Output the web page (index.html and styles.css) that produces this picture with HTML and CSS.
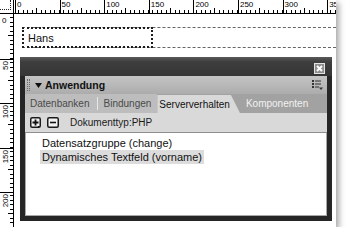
FILE: index.html
```html
<!DOCTYPE html>
<html>
<head>
    <title>Anwendung</title>
    <meta name="viewport" content="width=device-width, initial-scale=1.0">
    <link rel="stylesheet" href="styles.css">
</head>
<body>
    <div class="shot">
        <div class="top">
            <div class="corner"><div class="origin"></div></div>
            <div class="hruler">
                <span class="seg">0</span>
                <span class="seg">50</span>
                <span class="seg">100</span>
                <span class="seg">150</span>
                <span class="seg">200</span>
                <span class="seg">250</span>
                <span class="seg">300</span>
                <span class="seg">35</span>
            </div>
        </div>
        <div class="main">
            <div class="vruler">
                <span class="vseg first">0</span>
                <span class="vseg"><span class="vlabel">50</span></span>
                <span class="vseg"><span class="vlabel">100</span></span>
                <span class="vseg"><span class="vlabel">150</span></span>
                <span class="vseg"><span class="vlabel">200</span></span>
            </div>
            <div class="canvas">
                <div class="tablerow">
                    <div class="cell">Hans</div>
                </div>
                <div class="panel">
                    <div class="titlebar">
                        <span class="close">
                            <svg width="11" height="11" viewBox="0 0 11 11">
                                <rect x="0.5" y="0.5" width="10" height="10" fill="#8e8e8e" stroke="#e4e4e4"/>
                                <path d="M3 3 L8 8 M8 3 L3 8" stroke="#fff" stroke-width="1.8"/>
                            </svg>
                        </span>
                    </div>
                    <div class="header">
                        <span class="grip"></span>
                        <svg class="arrow" width="7" height="5" viewBox="0 0 7 5">
                            <path d="M0 0 H7 L3.5 5 Z" fill="#111"/>
                        </svg>
                        <span class="title">Anwendung</span>
                        <svg class="menu" width="11" height="10" viewBox="0 0 11 10">
                            <rect x="0" y="0" width="2" height="2" fill="#333"/>
                            <rect x="3" y="0.5" width="6" height="1" fill="#333"/>
                            <rect x="0" y="3" width="2" height="2" fill="#333"/>
                            <rect x="3" y="3.5" width="6" height="1" fill="#333"/>
                            <rect x="0" y="6" width="2" height="2" fill="#333"/>
                            <rect x="3" y="6.5" width="4" height="1" fill="#333"/>
                            <path d="M7 7.5 H11 L9 10 Z" fill="#333"/>
                        </svg>
                    </div>
                    <div class="tabs">
                        <div class="tabgroup">
                            <span class="tab">Datenbanken</span>
                            <span class="sep"></span>
                            <span class="tab">Bindungen</span>
                        </div>
                        <span class="tab active">Serververhalten</span>
                        <span class="tab dark">Komponenten</span>
                    </div>
                    <div class="toolbar">
                        <span class="btn">
                            <svg width="11" height="11" viewBox="0 0 11 11">
                                <rect x="0.75" y="0.75" width="9.5" height="9.5" rx="1.5" fill="#f2f2f2" stroke="#1a1a1a" stroke-width="1.5"/>
                                <path d="M5.5 2.5 V8.5 M2.5 5.5 H8.5" stroke="#111" stroke-width="1.8"/>
                                <path d="M7.5 9 H10 L8.75 10.5 Z" fill="#111"/>
                            </svg>
                        </span>
                        <span class="btn">
                            <svg width="12" height="11" viewBox="0 0 12 11">
                                <rect x="0.75" y="0.75" width="10.5" height="9.5" rx="1.5" fill="#f2f2f2" stroke="#1a1a1a" stroke-width="1.5"/>
                                <path d="M3 5.5 H9" stroke="#111" stroke-width="1.6"/>
                            </svg>
                        </span>
                        <span class="doctype">Dokumenttyp:PHP</span>
                    </div>
                    <div class="list">
                        <div class="item"><span>Datensatzgruppe (change)</span></div>
                        <div class="item selected"><span>Dynamisches Textfeld (vorname)</span></div>
                    </div>
                </div>
            </div>
        </div>
    </div>
</body>
</html>
```

FILE: styles.css
```css
body {
    margin: 0;
    background: #fff;
    font-family: "Liberation Sans", Arial, sans-serif;
}
.shot {
    width: 336px;
    height: 227px;
    overflow: hidden;
    background: #fff;
    box-shadow: 3px 3px 6px rgba(0, 0, 0, 0.35);
    display: flex;
    flex-direction: column;
}

/* rulers */
.top {
    display: flex;
    height: 14px;
    flex: none;
}
.corner {
    width: 11px;
    height: 9px;
    border-right: 1px solid #000;
    border-bottom: 1px solid #000;
    padding: 0 2px 4px 0;
    flex: none;
}
.origin {
    height: 100%;
    border-right: 1px dotted #222;
    border-bottom: 1px dotted #222;
}
.hruler {
    flex: 1;
    display: flex;
    border-bottom: 1px solid #000;
    padding-left: 1px;
    overflow: hidden;
}
.seg {
    flex: none;
    width: 44.6px;
    box-sizing: border-box;
    border-left: 1px solid #000;
    padding-left: 1px;
    font-size: 8px;
    line-height: 9px;
    color: #000;
    background-image:
        repeating-linear-gradient(90deg, transparent 0 3.46px, #000 3.46px 4.46px),
        linear-gradient(90deg, transparent 0 21.3px, #000 21.3px 22.3px, transparent 22.3px);
    background-size: 100% 3px, 100% 5px;
    background-position: left bottom, left bottom;
    background-repeat: no-repeat;
    background-origin: border-box;
}
.main {
    flex: 1;
    display: flex;
}
.vruler {
    width: 13px;
    flex: none;
    border-right: 1px solid #000;
    display: flex;
    flex-direction: column;
}
.vseg {
    flex: none;
    height: 44.6px;
    box-sizing: border-box;
    border-top: 1px solid #000;
    padding: 1px 0 0 2px;
    font-size: 8px;
    line-height: 8px;
    background-image:
        repeating-linear-gradient(180deg, transparent 0 3.46px, #000 3.46px 4.46px),
        linear-gradient(180deg, transparent 0 21.3px, #000 21.3px 22.3px, transparent 22.3px);
    background-size: 3px 100%, 5px 100%;
    background-position: right top, right top;
    background-repeat: no-repeat;
    background-origin: border-box;
}
.vseg.first {
    border-top: none;
    padding-top: 3px;
}
.vlabel {
    display: block;
    writing-mode: vertical-rl;
    transform: rotate(180deg);
    width: 8px;
}

/* design canvas */
.canvas {
    flex: 1;
    display: flex;
    flex-direction: column;
}
.tablerow {
    margin: 13px 0 0 8px;
    height: 19px;
    border-top: 1px dashed #666;
    border-bottom: 1px dashed #666;
    display: flex;
}
.cell {
    width: 131px;
    height: 21px;
    margin: -1px 0;
    box-sizing: border-box;
    border: 2px dotted #1c1c1c;
    display: flex;
    align-items: center;
    padding-left: 4px;
    font-size: 11px;
    color: #111;
}

/* floating panel */
.panel {
    width: 312px;
    height: 164px;
    margin: 9px 0 0 6px;
    box-sizing: border-box;
    background: #262626;
    padding: 0 5px 5px;
    display: flex;
    flex-direction: column;
}
.titlebar {
    height: 19px;
    flex: none;
    margin: 0 -5px;
    padding: 0 7px 2px 0;
    box-sizing: border-box;
    background: linear-gradient(#5a5a5a, #3e3e3e 25%, #353535);
    display: flex;
    align-items: flex-end;
    justify-content: flex-end;
}
.close svg {
    display: block;
}
.header {
    height: 18px;
    flex: none;
    background: linear-gradient(#c4c4c4, #acacac);
    display: flex;
    align-items: center;
    padding: 0 4px 0 2px;
}
.grip {
    width: 1px;
    height: 12px;
    border-left: 1px dotted #6a6a6a;
    border-right: 1px dotted #6a6a6a;
    margin-right: 5px;
}
.arrow {
    margin-right: 3px;
}
.title {
    font-size: 10.5px;
    font-weight: bold;
    color: #111;
    flex: 1;
}
.menu {
    display: block;
}
.tabs {
    height: 19px;
    flex: none;
    display: flex;
    background: #a2a2a2;
    font-size: 10px;
}
.tabgroup {
    display: flex;
    align-items: center;
    background: #bdbdbd;
    padding-left: 5px;
}
.tab {
    display: flex;
    align-items: center;
    color: #4a4a4a;
}
.sep {
    width: 1px;
    height: 13px;
    background: #e8e8e8;
    margin: 0 6px 0 7px;
}
.tabgroup .tab:last-child {
    padding-right: 6px;
}
.tab.active {
    background: #d9d9d9;
    color: #111;
    margin-top: 1px;
    padding: 0 10px 0 2px;
    clip-path: polygon(0 0, calc(100% - 9px) 0, 100% 100%, 0 100%);
}
.tab.dark {
    color: #f2f2f2;
    margin-left: 6px;
}
.toolbar {
    height: 20px;
    flex: none;
    box-sizing: border-box;
    background: #d9d9d9;
    border-bottom: 1px solid #8e8e8e;
    display: flex;
    align-items: center;
    padding-left: 5px;
}
.btn {
    margin-right: 6px;
}
.btn svg {
    display: block;
}
.doctype {
    margin-left: 5px;
    font-size: 10px;
    color: #1a1a1a;
}
.list {
    flex: 1;
    background: #fff;
    border: 1px solid #a8a8a8;
    border-top: none;
    padding: 3px 0 0 14px;
    font-size: 11px;
    line-height: 14px;
    color: #111;
}
.item span {
    display: inline-block;
    padding: 0 2px;
}
.item.selected span {
    background: #dcdcdc;
}
```
